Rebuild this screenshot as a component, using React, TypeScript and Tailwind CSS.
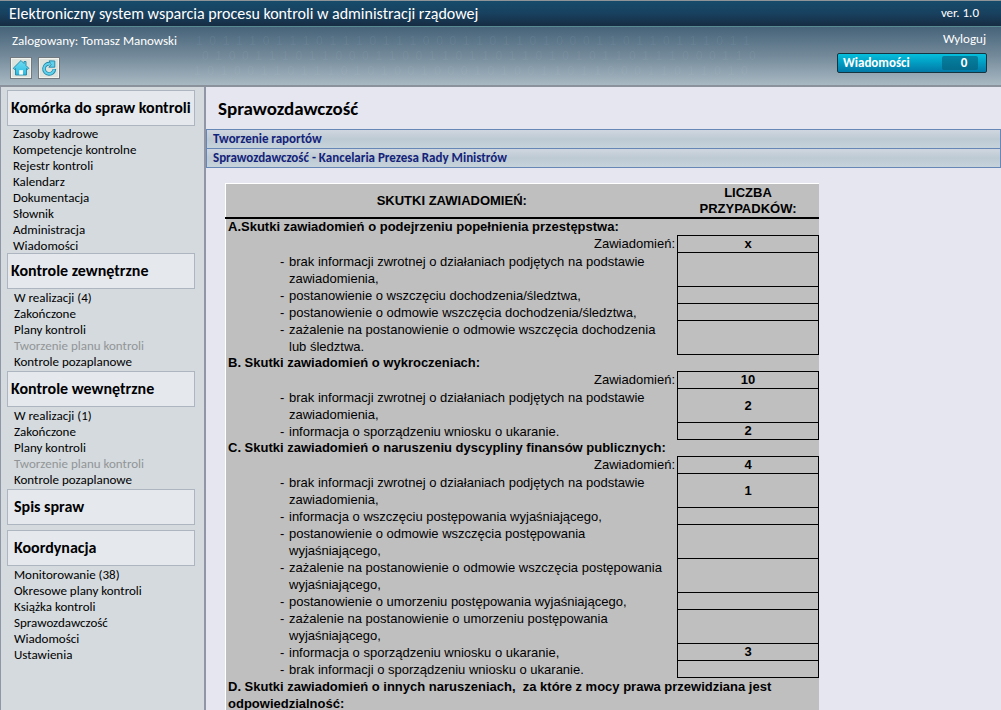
import { Fragment } from "react";

type Item = { label: string; disabled?: boolean };
type Group = { title: string; items: Item[]; className: string; titleClass: string; listClass: string };

const controlItems = (count: number): Item[] => [
  { label: `W realizacji (${count})` },
  { label: "Zakończone" },
  { label: "Plany kontroli" },
  { label: "Tworzenie planu kontroli", disabled: true },
  { label: "Kontrole pozaplanowe" },
];

const groups: Group[] = [
  {
    title: "Komórka do spraw kontroli",
    items: [
      { label: "Zasoby kadrowe" },
      { label: "Kompetencje kontrolne" },
      { label: "Rejestr kontroli" },
      { label: "Kalendarz" },
      { label: "Dokumentacja" },
      { label: "Słownik" },
      { label: "Administracja" },
      { label: "Wiadomości" },
    ],
    className: "-mb-px",
    titleClass: "pl-[3px]",
    listClass: "pl-1.5",
  },
  { title: "Kontrole zewnętrzne", items: controlItems(4), className: "", titleClass: "pl-[3px]", listClass: "pt-px pb-px pl-[7px]" },
  { title: "Kontrole wewnętrzne", items: controlItems(1), className: "", titleClass: "pl-[3px]", listClass: "pt-px pb-px pl-[7px]" },
  { title: "Spis spraw", items: [], className: "mb-[5px]", titleClass: "pl-1.5", listClass: "" },
  {
    title: "Koordynacja",
    items: [
      { label: "Monitorowanie (38)" },
      { label: "Okresowe plany kontroli" },
      { label: "Książka kontroli" },
      { label: "Sprawozdawczość" },
      { label: "Wiadomości" },
      { label: "Ustawienia" },
    ],
    className: "",
    titleClass: "pl-1.5",
    listClass: "pt-px pl-[7px]",
  },
];

type Row = { lines: string[]; value?: string };
type Section = { title: string; total: string; rows: Row[] };

const noFeedback = ["brak informacji zwrotnej o działaniach podjętych na podstawie", "zawiadomienia,"];

const sections: Section[] = [
  {
    title: "A.Skutki zawiadomień o podejrzeniu popełnienia przestępstwa:",
    total: "x",
    rows: [
      { lines: noFeedback },
      { lines: ["postanowienie o wszczęciu dochodzenia/śledztwa,"] },
      { lines: ["postanowienie o odmowie wszczęcia dochodzenia/śledztwa,"] },
      { lines: ["zażalenie na postanowienie o odmowie wszczęcia dochodzenia", "lub śledztwa."] },
    ],
  },
  {
    title: "B. Skutki zawiadomień o wykroczeniach:",
    total: "10",
    rows: [
      { lines: noFeedback, value: "2" },
      { lines: ["informacja o sporządzeniu wniosku o ukaranie."], value: "2" },
    ],
  },
  {
    title: "C. Skutki zawiadomień o naruszeniu dyscypliny finansów publicznych:",
    total: "4",
    rows: [
      { lines: noFeedback, value: "1" },
      { lines: ["informacja o wszczęciu postępowania wyjaśniającego,"] },
      { lines: ["postanowienie o odmowie wszczęcia postępowania", "wyjaśniającego,"] },
      { lines: ["zażalenie na postanowienie o odmowie wszczęcia postępowania", "wyjaśniającego,"] },
      { lines: ["postanowienie o umorzeniu postępowania wyjaśniającego,"] },
      { lines: ["zażalenie na postanowienie o umorzeniu postępowania", "wyjaśniającego,"] },
      { lines: ["informacja o sporządzeniu wniosku o ukaranie,"], value: "3" },
      { lines: ["brak informacji o sporządzeniu wniosku o ukaranie."] },
    ],
  },
];

const HomeIcon = () => (
  <svg viewBox="0 0 18 18" className="size-[18px]" aria-hidden="true">
    <defs>
      <linearGradient id="house" x1="0" y1="0" x2="0" y2="1">
        <stop offset="0" stopColor="#6fdcf2" />
        <stop offset="1" stopColor="#2bbbe2" />
      </linearGradient>
    </defs>
    <path d="M9 1.5 1.2 9.3l1.2 1.2 1.1-1V16h11V9.5l1.1 1 1.2-1.2L14 6.5v-4h-2v2L9 1.5Z" fill="url(#house)" stroke="#2486a5" strokeWidth="0.9" />
    <path d="M7.2 15.6v-4.4h3.8v4.4Z" fill="#fff" />
  </svg>
);

const RefreshIcon = () => (
  <svg viewBox="0 0 18 18" className="size-[18px]" aria-hidden="true">
    <path d="M14.4 10A5.2 5.2 0 1 1 10 4.7" fill="none" stroke="#2486a5" strokeWidth="3.6" />
    <path d="m9.2 1.8 5.6.2v6.2H8.8l2.4-2.2Z" fill="#5fd3ee" stroke="#2486a5" strokeWidth="0.9" />
    <path d="M14.2 10.4A5.1 5.1 0 1 1 10.4 4.8" fill="none" stroke="#5fd3ee" strokeWidth="2" />
  </svg>
);

const digitRows = [
  { x: 196, y: 18, bits: "101110111011101110001101101000110110111011" },
  { x: 202, y: 33, bits: "010011101100011001101101101010110111000110" },
  { x: 194, y: 48, bits: "101001101110101001000101001101100011011010" },
];

// Faint rows of binary digits behind the header
const DigitPattern = () => (
  <svg className="absolute inset-0 h-full w-full" aria-hidden="true">
    <g fill="#d5e6ee" fillOpacity="0.08" fontFamily="Liberation Sans" fontSize="12">
      {digitRows.map((row) => (
        <text key={row.y} x={row.x} y={row.y} xmlSpace="preserve">
          {row.bits.split("").join("  ")}
        </text>
      ))}
    </g>
  </svg>
);

const iconButton =
  "flex size-[22px] items-center justify-center border border-[#737b80] bg-[#dfe3de] shadow-[inset_0_0_0_1px_#f1f3ee]";

const Header = () => (
  <header className="border-b-2 border-[#8b929c] text-white">
    <div className="flex h-[27px] items-center justify-between border-t border-b border-t-[#8f9499] border-b-[#588a92] bg-linear-to-b from-[#174b6b] via-[#18415f] to-[#162c43] pr-[22px] pl-[9px]">
      <h1 className="text-[16px] leading-5">Elektroniczny system wsparcia procesu kontroli w administracji rządowej</h1>
      <span className="pb-0.5 text-[13px] leading-4">ver. 1.0</span>
    </div>
    <div className="relative bg-linear-to-b from-[#47647a] via-[#748a9a] to-[#a9b9c3]">
      <DigitPattern />
      <div className="relative flex h-[58px] justify-between pr-[14px] pl-[10px]">
        <div className="pt-1.5">
          <p className="pl-0.5 text-[13px] leading-4">Zalogowany: Tomasz Manowski</p>
          <div className="flex gap-1.5 pt-2">
            <button aria-label="Strona główna" className={iconButton}>
              <HomeIcon />
            </button>
            <button aria-label="Odśwież" className={iconButton}>
              <RefreshIcon />
            </button>
          </div>
        </div>
        <div className="flex flex-col items-end pt-1">
          <a href="#" className="pr-px text-[13px] leading-4">Wyloguj</a>
          <button className="mt-1.5 flex h-5 w-[150px] items-center justify-between rounded-xs border border-[#163440] bg-linear-to-b from-[#06bfdc] to-[#0279a7] pr-2 pl-[5px] text-[13px] font-bold">
            <span>Wiadomości</span>
            <span className="h-[14px] w-9 rounded-xs bg-linear-to-b from-[#05809f] to-[#046b8c] pl-2 leading-[14px]">0</span>
          </button>
        </div>
      </div>
    </div>
  </header>
);

const Sidebar = () => (
  <nav className="w-[206px] shrink-0 border-r-2 border-l border-[#9196a6] bg-[#d4dade] pt-[3px] pr-[9px] pl-1.5">
    {groups.map((group) => (
      <div key={group.title} className={group.className}>
        <h2 className={`h-9 border border-[#adb5c0] bg-[#e5e9ee] text-[16px] leading-[34px] font-bold ${group.titleClass}`}>{group.title}</h2>
        <ul className={group.listClass}>
          {group.items.map((item) => (
            <li key={item.label} className="text-[13px] leading-4">
              {item.disabled ? <span className="text-[#929597]">{item.label}</span> : <a href="#">{item.label}</a>}
            </li>
          ))}
        </ul>
      </div>
    ))}
  </nav>
);

const Report = () => (
  <table className="mt-[15px] ml-[19px] w-[594px] max-w-full border-collapse border-t border-l border-white bg-[#bfbfbf] font-['Liberation_Sans',sans-serif] text-[13px] leading-4">
    <thead>
      <tr className="border-b-2 border-black">
        <th className="p-0 pt-px">SKUTKI ZAWIADOMIEŃ:</th>
        <th className="w-[141px] p-0 pt-px">
          LICZBA
          <br />
          PRZYPADKÓW:
        </th>
      </tr>
    </thead>
    <tbody>
      {sections.map((section) => (
        <Fragment key={section.title}>
          <tr className="h-[17px]">
            <th colSpan={2} className="p-0 pl-0.5 text-left">{section.title}</th>
          </tr>
          <tr className="h-[17px]">
            <td className="p-0 pr-0.5 text-right">Zawiadomień:</td>
            <td className="border border-black p-0 text-center font-bold">{section.total}</td>
          </tr>
          {section.rows.map((row) => (
            <tr key={row.lines[0]} className="h-[17px]">
              <td className="p-0 pl-[54px]">
                <div className="flex leading-[17px]">
                  <span className="w-[9px]">-</span>
                  <span>
                    {row.lines.map((line) => (
                      <span key={line} className="block">{line}</span>
                    ))}
                  </span>
                </div>
              </td>
              <td className="border border-black p-0 text-center font-bold">{row.value}</td>
            </tr>
          ))}
        </Fragment>
      ))}
      <tr>
        <th colSpan={2} className="p-0 pl-0.5 text-left leading-[17px] whitespace-pre-wrap">
          {"D. Skutki zawiadomień o innych naruszeniach,  za które z mocy prawa przewidziana jest odpowiedzialność:"}
        </th>
      </tr>
    </tbody>
  </table>
);

export default function App() {
  return (
    <div className="flex h-screen flex-col overflow-hidden bg-[#e6e6f0] font-[Carlito,Calibri,'Open_Sans',sans-serif] text-black">
      <Header />
      <div className="flex min-h-0 flex-1">
        <Sidebar />
        <main className="min-w-0 flex-1">
          <h2 className="px-3 pt-2.5 pb-2 text-[19px] leading-6 font-bold">Sprawozdawczość</h2>
          <div className="border border-[#6787b7] text-[13px] leading-[18px] font-bold text-[#14237a]">
            <h3 className="border-b border-[#6787b7] bg-linear-to-b from-[#d0d6df] via-[#bdcad4] to-[#c6d3db] px-1.5">Tworzenie raportów</h3>
            <h3 className="bg-linear-to-b from-[#d0d6df] via-[#bdcad4] to-[#c6d3db] px-1.5">Sprawozdawczość - Kancelaria Prezesa Rady Ministrów</h3>
          </div>
          <Report />
        </main>
      </div>
    </div>
  );
}
